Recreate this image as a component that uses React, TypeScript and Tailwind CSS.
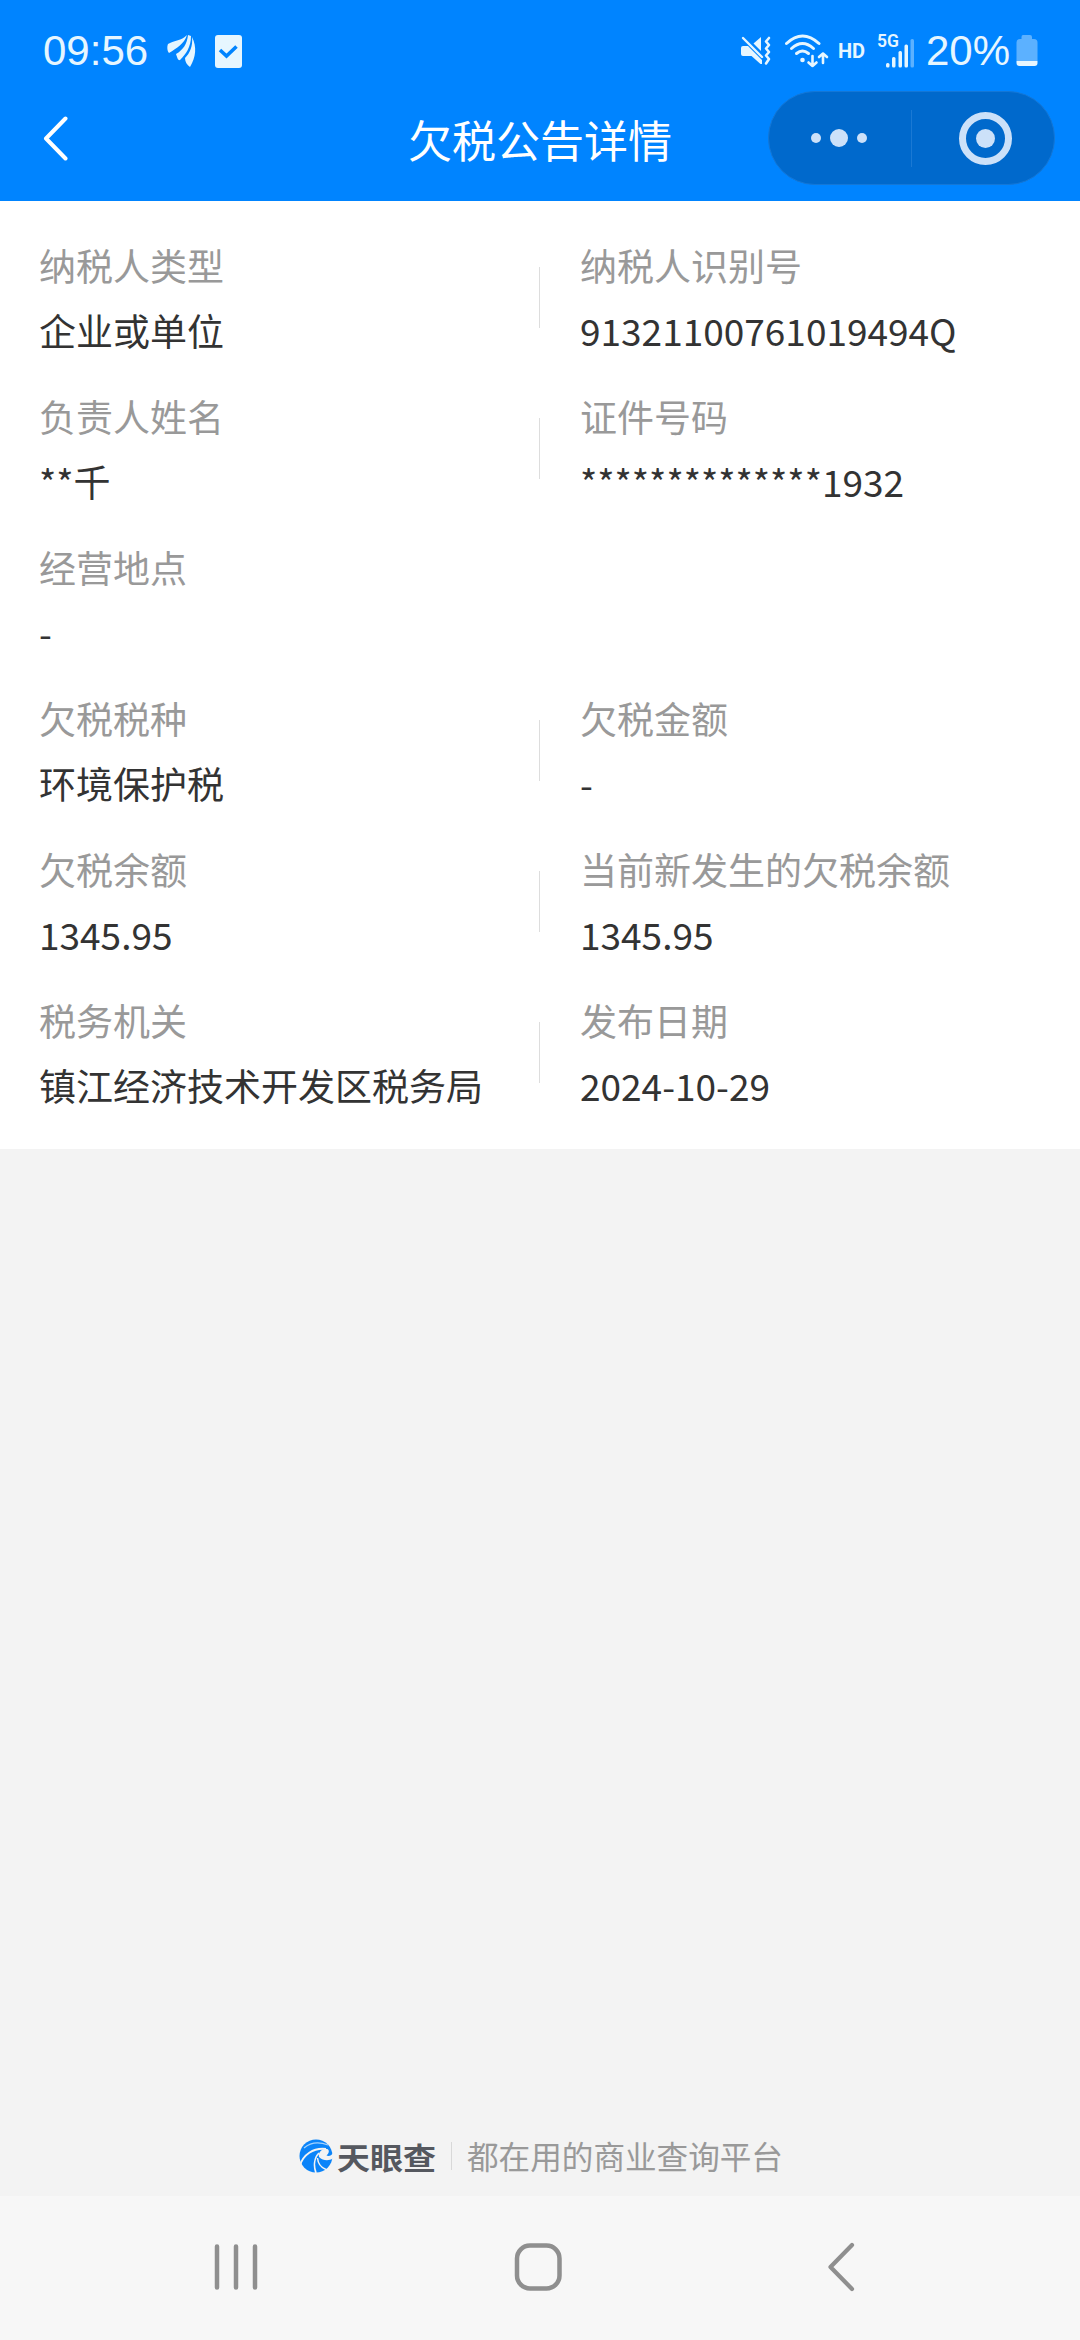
type Field = {
  label: string
  value: string
}

const rows: Field[][] = [
  [
    { label: "纳税人类型", value: "企业或单位" },
    { label: "纳税人识别号", value: "91321100761019494Q" },
  ],
  [
    { label: "负责人姓名", value: "**千" },
    { label: "证件号码", value: "**************1932" },
  ],
  [{ label: "经营地点", value: "-" }],
  [
    { label: "欠税税种", value: "环境保护税" },
    { label: "欠税金额", value: "-" },
  ],
  [
    { label: "欠税余额", value: "1345.95" },
    { label: "当前新发生的欠税余额", value: "1345.95" },
  ],
  [
    { label: "税务机关", value: "镇江经济技术开发区税务局" },
    { label: "发布日期", value: "2024-10-29" },
  ],
]

function StatusBar() {
  return (
    <div className="flex h-[76px] items-end justify-between pr-[42px] pl-[43px] text-[#e6f6ff]">
      <div className="flex h-[50px] items-center">
        <span className="w-[106px] font-['Liberation_Sans'] text-[42px] leading-[50px]">09:56</span>

        <svg className="ml-[17px]" width="32" height="36" viewBox="0 0 32 36" fill="currentColor">
          <path d="M2 11 C9 7 15 8 21 2 C18 11 11 15 3 20 C1 18 1 13 2 11Z" />
          <path d="M22 2 L25 3 C25 14 20 21 14 27 C12 28 11 24 10 21 C17 17 21 11 22 2Z" />
          <path d="M26 4 C31 14 30 24 24 34 C21 32 19 29 19 25 C24 20 27 13 26 4Z" />
        </svg>

        <svg className="ml-[17px]" width="27" height="33" viewBox="0 0 27 33">
          <rect width="27" height="33" rx="3" fill="currentColor" />
          <path d="M5 15 L11.500 21 L21.500 11.500" fill="none" stroke="#0084ff" strokeWidth="3.600" />
        </svg>
      </div>

      <div className="flex h-[50px] items-center">
        <svg width="30" height="30" viewBox="0 0 30 30" fill="none">
          <path d="M12.500 7.500 L20 1 V15Z" fill="currentColor" />
          <path d="M2 10 H7 L21 24 V28 L19.500 28 L10.500 20 H2 Q0 20 0 18 V12 Q0 10 2 10Z" fill="currentColor" />
          <path d="M2 2 L21 21" stroke="currentColor" strokeWidth="2.400" strokeLinecap="round" />
          <path
            d="M28 2 L25 5.500 L28 9 L25 12.500 L28 16 L25 19.500 L28 23 L25 27.500"
            stroke="currentColor"
            strokeWidth="2.600"
            strokeLinecap="round"
            strokeLinejoin="round"
          />
        </svg>

        <svg
          className="ml-[13px]"
          width="45"
          height="34"
          viewBox="0 0 45 34"
          fill="none"
          stroke="currentColor"
          strokeWidth="3"
          strokeLinecap="round"
          strokeLinejoin="round"
        >
          <path d="M2.500 9.500 Q18.500 -5.500 35 9.500" />
          <path d="M7.500 14.500 Q18.500 4.500 29.500 14.500" />
          <path d="M12.500 19.500 Q18.500 14.500 24.500 19.500" />
          <circle cx="18.500" cy="26" r="2.300" fill="currentColor" stroke="none" />
          <path d="M28.500 22 V32 M24.500 28.500 L28.500 32 L32.500 28.500" strokeWidth="2.600" />
          <path d="M39 29 V19.500 M35 23 L39 19.500 L43 23" strokeWidth="2.600" />
        </svg>

        <span className="ml-[9px] w-[27px] font-['Roboto'] text-[20px] leading-[20px] font-bold">HD</span>

        {/* 5G label sits above the first signal bars */}
        <div className="relative ml-[12px] h-[34px] w-[38px]">
          <svg width="38" height="34" viewBox="0 0 38 34" fill="currentColor">
            <rect x="9" y="29" width="3.500" height="4.500" rx="1.500" />
            <rect x="15" y="23" width="3.500" height="10.500" rx="1.500" />
            <rect x="21.500" y="17" width="3.500" height="16.500" rx="1.500" />
            <rect x="27.500" y="10.500" width="3.500" height="23" rx="1.500" />
            <rect x="33.500" y="5" width="3.500" height="28.500" rx="1.500" opacity="0.400" />
          </svg>
          <span className="absolute top-[-3px] left-0 font-['Roboto'] text-[17.5px] leading-[20px] font-semibold">5G</span>
        </div>

        <span className="ml-[11px] w-[85px] font-['Liberation_Sans'] text-[42px] leading-[50px]">20%</span>

        <svg className="ml-[5px]" width="22" height="32" viewBox="0 0 22 32">
          <path
            d="M7 0 H14 Q16 0 16 2 V4 H18 Q21.500 4 21.500 7.500 V26 H0.500 V7.500 Q0.500 4 4 4 H5.500 V2 Q5.500 0 7 0Z"
            fill="#5cb1ff"
          />
          <path d="M0.500 26 H21.500 V28 Q21.500 31 18.500 31 H3.500 Q0.500 31 0.500 28Z" fill="currentColor" />
        </svg>
      </div>
    </div>
  )
}

function TitleBar() {
  return (
    <div className="grid h-[125px] grid-cols-[1fr_auto_1fr] pr-[25px] pl-[43px]">
      <svg
        className="mt-[40px]"
        width="26"
        height="46"
        viewBox="0 0 26 46"
        fill="none"
        stroke="white"
        strokeWidth="4"
        strokeLinecap="round"
        strokeLinejoin="round"
      >
        <path d="M22.500 2.500 L3 22.500 L22.500 42.500" />
      </svg>

      <h1 className="mt-[31px] ml-[-18px] text-[44px] leading-[64px] text-white">欠税公告详情</h1>

      <div className="mt-[15px] flex h-[94px] w-[287px] items-center justify-self-end rounded-full border border-[#1477d6] bg-[#0069cc]">
        <div className="flex w-[142px] items-center justify-center gap-[9px] pr-[2px]">
          <span className="size-[10px] rounded-full bg-[#cce1f9]" />
          <span className="size-[18px] rounded-full bg-[#cce1f9]" />
          <span className="size-[10px] rounded-full bg-[#cce1f9]" />
        </div>
        <div className="h-[57px] w-px bg-[#1a79d4]" />
        <div className="flex flex-1 justify-center pl-[5px]">
          <div className="flex size-[53px] items-center justify-center rounded-full border-[7px] border-[#cce1f9]">
            <span className="size-[19px] rounded-full bg-[#cce1f9]" />
          </div>
        </div>
      </div>
    </div>
  )
}

function FieldCell({ label, value }: Field) {
  return (
    <div className="flex flex-col gap-[15px] leading-[50px]">
      <div className="text-[#999999]">{label}</div>
      <div className="text-[#333333]">{value}</div>
    </div>
  )
}

function Logo() {
  return (
    <svg width="34" height="34" viewBox="0 0 34 34" fill="none">
      <circle cx="17" cy="17" r="16.500" fill="#0b84f9" />
      {/* hook opening on the right */}
      <path
        d="M34 19.500 C30 22 24 22 20 18 C19 13 23 9.500 28 10 C30.500 10.500 30.500 14 27.500 16.500 C30 17.500 32.500 16.500 34 14Z"
        fill="#f3f3f3"
      />
      <path d="M1 26.500 C4 16 14 8.500 27 10" stroke="#f3f3f3" strokeWidth="1.900" />
      <path d="M20 14 C15 19 14.500 27 17 34" stroke="#f3f3f3" strokeWidth="1.700" />
      <path d="M18.500 19 C19 25 22 28.500 27 30.500" stroke="#f3f3f3" strokeWidth="1.500" />
      <path d="M5 9 C12 3 21 3 29 6" stroke="#a6d3fc" strokeWidth="1.200" />
    </svg>
  )
}

function NavBar() {
  return (
    <div className="flex h-[144px] items-start bg-[#f7f7f7] pt-[46px] pl-[214px]">
      <svg width="44" height="50" viewBox="0 0 44 50" stroke="#8f8f8f" strokeWidth="4.500" strokeLinecap="round">
        <path d="M3 4.500 V45.500 M22 4.500 V45.500 M41 4.500 V45.500" />
      </svg>

      <svg className="ml-[255px]" width="50" height="50" viewBox="0 0 50 50" fill="none">
        <rect x="4" y="3.500" width="42.500" height="43" rx="13" stroke="#8f8f8f" strokeWidth="4.500" />
      </svg>

      <svg className="ml-[263px]" width="30" height="50" viewBox="0 0 30 50" fill="none">
        <path
          d="M26 3 L4.500 25 L26 47"
          stroke="#8f8f8f"
          strokeWidth="4.200"
          strokeLinecap="round"
          strokeLinejoin="round"
        />
      </svg>
    </div>
  )
}

export default function App() {
  return (
    <div className="flex h-[2340px] w-[1080px] flex-col bg-[#f3f3f3] font-['Noto_Sans_CJK_SC',sans-serif]">
      <header className="bg-[#0084ff]">
        <StatusBar />
        <TitleBar />
      </header>

      <main className="flex flex-col gap-9 bg-white pt-[39px] pb-[39px] text-[37px]">
        {rows.map((fields) => (
          <div key={fields[0].label} className="flex pl-[39px]">
            <div className="w-[500px]">
              <FieldCell {...fields[0]} />
            </div>

            {fields[1] && (
              <>
                <div className="mt-[27px] mr-[40px] h-[61px] w-px bg-[#dddddd]" />
                <FieldCell {...fields[1]} />
              </>
            )}
          </div>
        ))}
      </main>

      <footer className="mt-auto flex h-[80px] items-center pl-[299px]">
        <Logo />
        <span className="ml-[4px] w-[99px] scale-y-90 text-[33px] leading-[40px] font-bold text-[#55585f]">天眼查</span>
        <div className="ml-[15px] h-[28px] w-px bg-[#d8d8d8]" />
        <span className="ml-[15px] pb-[2px] text-[31.6px] leading-[40px] text-[#999999]">都在用的商业查询平台</span>
      </footer>

      <NavBar />
    </div>
  )
}
